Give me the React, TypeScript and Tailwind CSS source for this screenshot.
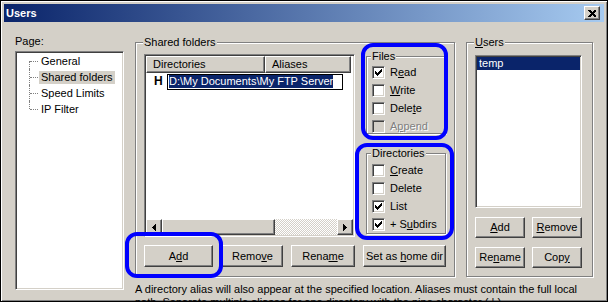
import React from 'react';

const raised =
  'border border-t-white border-l-white border-b-[#404040] border-r-[#404040] shadow-[inset_-1px_-1px_0_#808080]';
const sunken =
  'border border-t-[#808080] border-l-[#808080] border-b-white border-r-white shadow-[inset_1px_1px_0_#404040,inset_-1px_-1px_0_#d4d0c8] p-[1px]';
const etched = 'border border-[#808080] shadow-[inset_1px_1px_0_#fff,1px_1px_0_#fff]';

function U({ children }: { children: React.ReactNode }) {
  return <span className="underline underline-offset-1">{children}</span>;
}

function Button({ children, className }: { children: React.ReactNode; className: string }) {
  return (
    <div className={`${raised} flex items-center justify-center bg-[#d4d0c8] ${className}`}>
      <span className="whitespace-pre leading-[13px]">{children}</span>
    </div>
  );
}

function GroupBox({
  label,
  className,
  labelLeft,
  children,
}: {
  label: React.ReactNode;
  className: string;
  labelLeft: string;
  children?: React.ReactNode;
}) {
  return (
    <div className={`relative ${etched} ${className}`}>
      <span className={`absolute top-[-7px] ${labelLeft} bg-[#d4d0c8] px-[1px] leading-[13px]`}>{label}</span>
      {children}
    </div>
  );
}

function CheckRow({
  label,
  checked,
  disabled,
}: {
  label: React.ReactNode;
  checked?: boolean;
  disabled?: boolean;
}) {
  return (
    <div className="flex h-[18px] items-center">
      <span
        className={`flex h-[13px] w-[13px] items-center justify-center border border-t-[#808080] border-l-[#808080] border-b-white border-r-white shadow-[inset_1px_1px_0_#404040,inset_-1px_-1px_0_#d4d0c8] ${
          disabled ? 'bg-[#d4d0c8]' : 'bg-white'
        }`}
      >
        {checked && (
          <svg width="7" height="7" viewBox="0 0 7 7" shapeRendering="crispEdges">
            <path d="M6 0h1v3h-1v1h-1v1h-1v1h-1v1h-1v-1h-1v-1h-1v-3h1v1h1v1h1v-1h1v-1h1z" fill="#000" />
          </svg>
        )}
      </span>
      <span
        className={`ml-[5px] whitespace-pre leading-[13px] ${disabled ? 'text-[#808080] [text-shadow:1px_1px_0_#fff]' : ''}`}
      >
        {label}
      </span>
    </div>
  );
}

function TreeRow({ label, selected, first, last }: { label: string; selected?: boolean; first?: boolean; last?: boolean }) {
  return (
    <div className="flex h-[16px] items-center">
      <div className="relative h-full w-[22px]">
        <div
          className={`absolute left-[12px] w-0 border-l border-dotted border-[#808080] ${
            first ? 'top-[8px] bottom-0' : last ? 'top-0 h-[8px]' : 'top-0 bottom-0'
          }`}
        />
        <div className="absolute left-[13px] top-[8px] w-[8px] border-t border-dotted border-[#808080]" />
      </div>
      <span className={`px-[2px] leading-[13px] ${selected ? 'bg-[#d4d0c8]' : ''}`}>{label}</span>
    </div>
  );
}

export default function App() {
  return (
    <div className="relative h-[305px] w-[608px] bg-white font-['Liberation_Sans',Arial,sans-serif] text-[11px] text-black">
      <div className="relative h-[302px] overflow-hidden border border-black bg-[#d4d0c8] p-[3px] shadow-[inset_1px_1px_0_#fff,inset_-1px_-1px_0_#808080]">
        {/* title bar */}
        <div className="flex h-[18px] items-center justify-between bg-[linear-gradient(to_right,#0a246a,#a6caf0)] pl-[2px] pr-[4px]">
          <span className="font-bold text-white">Users</span>
          <div className={`${raised} flex h-[14px] w-[16px] items-center justify-center bg-[#d4d0c8]`}>
            <svg width="8" height="7" viewBox="0 0 8 7" shapeRendering="crispEdges">
              <path d="M0 0h2l2 2l2-2h2v1l-2.5 2.5l2.5 2.5v1h-2l-2-2l-2 2h-2v-1l2.5-2.5l-2.5-2.5z" fill="#000" />
            </svg>
          </div>
        </div>

        <div className="flex pl-[11px] pt-[13px]">
          {/* page tree */}
          <div className="w-[109px]">
            <div className="h-[13px] leading-[13px]">Page:</div>
            <div className={`${sunken} mt-[3px] h-[239px] bg-white`}>
              <TreeRow label="General" first />
              <TreeRow label="Shared folders" selected />
              <TreeRow label="Speed Limits" />
              <TreeRow label="IP Filter" last />
            </div>
          </div>

          <div className="ml-[11px] mt-[7px]">
            <div className="flex gap-[11px]">
              {/* shared folders */}
              <GroupBox label="Shared folders" className="h-[235px] w-[320px] pl-[8px] pt-[11px]" labelLeft="left-[7px]">
                <div className="flex">
                  <div className={`${sunken} flex h-[183px] w-[211px] flex-col bg-white`}>
                    <div className="flex h-[17px]">
                      <div className={`${raised} w-[119px] bg-[#d4d0c8] pl-[6px] leading-[14px]`}>Directories</div>
                      <div className={`${raised} w-[86px] bg-[#d4d0c8] pl-[6px] leading-[14px]`}>Aliases</div>
                    </div>
                    <div className="flex h-[16px] items-center pl-[8px] pt-[1px]">
                      <span className="w-[13px] text-[12px] font-bold leading-[13px]">H</span>
                      <div className="flex h-[16px] w-[176px] items-center border border-black pl-[1px]">
                        <span className="bg-[#0a246a] leading-[13px] text-white">D:\My Documents\My FTP Server</span>
                      </div>
                    </div>
                    <div className="flex-1" />
                    <div className="flex h-[16px]">
                      <div className={`${raised} flex w-[16px] items-center justify-center bg-[#d4d0c8]`}>
                        <svg width="4" height="7" viewBox="0 0 4 7" shapeRendering="crispEdges">
                          <path d="M4 0v7l-4-3.5z" fill="#000" />
                        </svg>
                      </div>
                      <div className={`${raised} w-[113px] bg-[#d4d0c8]`} />
                      <div className="flex-1 bg-[repeating-conic-gradient(#d4d0c8_0_25%,#fff_0_50%)] bg-[length:2px_2px]" />
                      <div className={`${raised} flex w-[16px] items-center justify-center bg-[#d4d0c8]`}>
                        <svg width="4" height="7" viewBox="0 0 4 7" shapeRendering="crispEdges">
                          <path d="M0 0v7l4-3.5z" fill="#000" />
                        </svg>
                      </div>
                    </div>
                  </div>

                  <div className="ml-[11px]">
                    <GroupBox label="Files" className="mt-[2px] h-[78px] w-[80px] pl-[5px] pt-[6px]" labelLeft="left-[4px]">
                      <CheckRow label={<>R<U>e</U>ad</>} checked />
                      <CheckRow label={<><U>W</U>rite</>} />
                      <CheckRow label={<>Dele<U>t</U>e</>} />
                      <CheckRow label={<>A<U>p</U>pend</>} disabled />
                    </GroupBox>
                    <GroupBox label="Directories" className="mt-[19px] h-[81px] w-[80px] pl-[5px] pt-[7px]" labelLeft="left-[4px]">
                      <CheckRow label={<><U>C</U>reate</>} />
                      <CheckRow label="Delete" />
                      <CheckRow label="List" checked />
                      <CheckRow label={<>+ S<U>u</U>bdirs</>} checked />
                    </GroupBox>
                  </div>
                </div>
                <div className="mt-[8px] flex">
                  <Button className="h-[22px] w-[69px]">A<U>d</U>d</Button>
                  <Button className="ml-[9px] h-[22px] w-[61px]">Remo<U>v</U>e</Button>
                  <Button className="ml-[8px] h-[22px] w-[64px]">Rena<U>m</U>e</Button>
                  <Button className="ml-[8px] h-[22px] w-[83px]">Set as <U>h</U>ome dir</Button>
                </div>
              </GroupBox>

              {/* users */}
              <GroupBox label={<><U>U</U>sers</>} className="h-[235px] w-[127px] pl-[8px] pt-[11px]" labelLeft="left-[7px]">
                <div className={`${sunken} mt-[1px] h-[153px] w-[107px] bg-white`}>
                  <div className="h-[13px] bg-[#0a246a] pl-[2px] leading-[13px] text-white">temp</div>
                </div>
                <div className="mt-[9px] flex gap-[7px]">
                  <Button className="h-[21px] w-[50px]"><U>A</U>dd</Button>
                  <Button className="h-[21px] w-[50px]"><U>R</U>emove</Button>
                </div>
                <div className="mt-[9px] flex gap-[7px]">
                  <Button className="h-[21px] w-[50px]">Re<U>n</U>ame</Button>
                  <Button className="h-[21px] w-[50px]">Cop<U>y</U></Button>
                </div>
              </GroupBox>
            </div>
            <p className="mt-[6px] leading-[13px]">
              A directory alias will also appear at the specified location. Aliases must contain the full local
              <br />
              path. Separate multiple aliases for one directory with the pipe character ( | ).
            </p>
          </div>
        </div>
      </div>

      {/* annotation highlights */}
      <div className="pointer-events-none absolute left-[361px] top-[43px] h-[97px] w-[87px] rounded-[12px] border-4 border-[#0000ff]" />
      <div className="pointer-events-none absolute left-[355px] top-[143px] h-[97px] w-[99px] rounded-[12px] border-4 border-[#0000ff]" />
      <div className="pointer-events-none absolute left-[125px] top-[232px] h-[46px] w-[98px] rounded-[12px] border-4 border-[#0000ff]" />
    </div>
  );
}
